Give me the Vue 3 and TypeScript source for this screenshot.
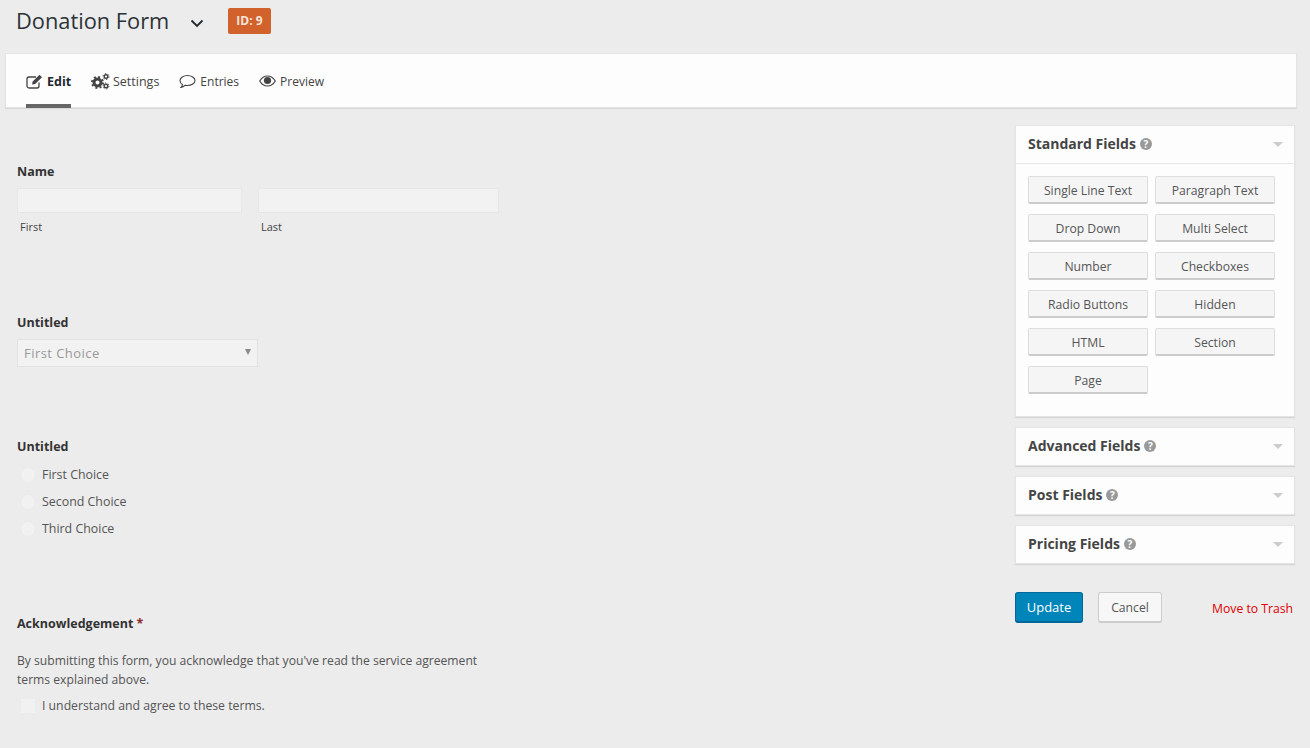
<script setup lang="ts">
const tabs = ['Settings', 'Entries', 'Preview']
const fields = ['Single Line Text', 'Paragraph Text', 'Drop Down', 'Multi Select', 'Number', 'Checkboxes', 'Radio Buttons', 'Hidden', 'HTML', 'Section', 'Page']
const groups = ['Advanced Fields', 'Post Fields', 'Pricing Fields']
const choices = ['First Choice', 'Second Choice', 'Third Choice']
</script>

<template>
  <div class="page">
    <header class="head">
      <h1>Donation Form</h1>
      <svg class="chev" width="14" height="9" viewBox="0 0 14 9"><path d="M1.5 1.5 7 7l5.500-5.500" fill="none" stroke="#23282d" stroke-width="1.800" /></svg>
      <span class="badge">ID: 9</span>
    </header>

    <nav class="tabs">
      <a class="tab active">
        <svg width="17" height="15" viewBox="0 0 17 15"><path d="M13 8.500V12a2 2 0 0 1-2 2H3a2 2 0 0 1-2-2V5a2 2 0 0 1 2-2h7" fill="none" stroke="#444" stroke-width="1.300" /><path d="M6 10.500 6.700 7.500 13.500 .8 16 3.200 9.200 10z" fill="#444" /></svg>
        Edit
      </a>
      <a class="tab s">
        <svg width="19" height="17" viewBox="0 0 19 17"><g fill="none" stroke="#444"><circle cx="6.500" cy="9.500" r="3.500" stroke-width="3" /><circle cx="6.500" cy="9.500" r="5.600" stroke-width="1.800" stroke-dasharray="2 2.400" /><circle cx="15" cy="3.500" r="1.800" stroke-width="1.400" /><circle cx="15" cy="3.500" r="3" stroke-width="1" stroke-dasharray="1.400 1.740" /><circle cx="15" cy="13" r="1.800" stroke-width="1.400" /><circle cx="15" cy="13" r="3" stroke-width="1" stroke-dasharray="1.400 1.740" /></g></svg>
        {{ tabs[0] }}
      </a>
      <a class="tab e">
        <svg width="17" height="15" viewBox="0 0 17 15"><path d="M8.500 1.500c4 0 7.500 2.200 7.500 5s-3.500 5-7.500 5c-.8 0-1.600-.1-2.300-.3C5 12.500 3.500 13.500 2 13.500c.8-.8 1.500-2 1.500-3C1.900 9.600 1 8.100 1 6.500c0-2.800 3.500-5 7.500-5z" fill="none" stroke="#444" stroke-width="1.100" /></svg>
        {{ tabs[1] }}
      </a>
      <a class="tab p">
        <svg width="17" height="12" viewBox="0 0 17 12"><path d="M.7 6C2.500 3 5.300 1 8.500 1s6 2 7.800 5c-1.800 3-4.600 5-7.800 5S2.500 9 .7 6z" fill="none" stroke="#444" stroke-width="1.200" /><circle cx="8.500" cy="5.500" r="3.600" fill="#444" /></svg>
        {{ tabs[2] }}
      </a>
    </nav>

    <div class="columns">
      <main class="form">
        <section class="name-field">
          <div class="label">Name</div>
          <div class="name-row">
            <div class="name-col first">
              <div class="input"></div>
              <div class="sub">First</div>
            </div>
            <div class="name-col last">
              <div class="input"></div>
              <div class="sub">Last</div>
            </div>
          </div>
        </section>

        <section class="select-field">
          <div class="label">Untitled</div>
          <div class="select">
            <span>First Choice</span>
            <span class="arrow"></span>
          </div>
        </section>

        <section class="radio-field">
          <div class="label">Untitled</div>
          <div v-for="c in choices" :key="c" class="choice">
            <span class="radio"></span>{{ c }}
          </div>
        </section>

        <section class="ack-field">
          <div class="label">Acknowledgement <span class="req">*</span></div>
          <p class="ack">By submitting this form, you acknowledge that you've read the service agreement terms explained above.</p>
          <div class="choice check">
            <span class="box"></span>I understand and agree to these terms.
          </div>
        </section>
      </main>

      <aside class="side">
        <div class="panel open">
          <div class="panel-head open-head">
            <span class="title">Standard Fields</span>
            <span class="help">?</span>
            <span class="caret"></span>
          </div>
          <div class="grid">
            <button v-for="f in fields" :key="f" class="field-btn">{{ f }}</button>
          </div>
        </div>
        <div v-for="g in groups" :key="g" class="panel">
          <div class="panel-head">
            <span class="title">{{ g }}</span>
            <span class="help">?</span>
            <span class="caret"></span>
          </div>
        </div>
        <div class="actions">
          <button class="update">Update</button>
          <button class="cancel">Cancel</button>
          <a class="trash">Move to Trash</a>
        </div>
      </aside>
    </div>
  </div>
</template>

<style>
html, body { margin: 0; background: #ececec; }
</style>

<style scoped>
.page {
  width: 1310px;
  height: 748px;
  overflow: hidden;
  background: #ececec;
  font-family: "Open Sans", "Noto Sans", sans-serif;
  font-size: 13px;
  color: #444;
  box-sizing: border-box;
}
.head {
  display: flex;
  align-items: center;
  height: 43px;
  padding-left: 16px;
}
h1 {
  margin: 0 0 2px;
  font-size: 21.800px;
  font-weight: 400;
  color: #2c3338;
  line-height: 39px;
  width: 174px;
}
.chev { margin-top: 3px; }
.badge {
  margin: -1px 0 0 24px;
  width: 43px;
  height: 26px;
  line-height: 26px;
  text-align: center;
  background: #d2622b;
  color: #f4e4da;
  font-weight: 700;
  font-size: 12px;
  border-radius: 2px;
}
.tabs {
  display: flex;
  margin: 10px 13px 0 5px;
  height: 55px;
  box-sizing: border-box;
  background: #fdfdfd;
  border: 1px solid #e4e4e4;
  box-shadow: 0 1px 1px rgba(0, 0, 0, .08);
  padding-left: 20px;
}
.tab {
  display: flex;
  align-items: center;
  gap: 4px;
  height: 54px;
  box-sizing: border-box;
  font-size: 12px;
  color: #444;
  padding-bottom: 0;
}
.tab svg { flex: none; }
.tab.active {
  width: 45px;
  font-size: 12.500px;
  font-weight: 700;
  color: #23282d;
  border-bottom: 4px solid #666;
  padding-top: 4px;
}
.s { margin-left: 20px; gap: 3px; font-size: 12.500px; }
.e { margin-left: 20px; }
.p { margin-left: 20px; gap: 4px; }
.columns {
  display: flex;
  justify-content: space-between;
  padding: 17px 15px 0 17px;
}
.form { width: 482px; }
.label {
  font-weight: 700;
  font-size: 12.500px;
  line-height: 18px;
  color: #333;
}
.name-field { padding-top: 38px; height: 169px; box-sizing: border-box; }
.select-field { padding-top: 20px; height: 124px; box-sizing: border-box; }
.radio-field { margin-top: 20px; height: 177px; box-sizing: border-box; }
.radio-field .choice { font-size: 12.400px; }
.name-row { display: flex; gap: 16px; margin-top: 7px; }
.name-col.first { width: 225px; }
.name-col.last { width: 241px; }
.input {
  height: 25px;
  box-sizing: border-box;
  background: #f2f2f2;
  border: 1px solid #e6e6e6;
  border-radius: 1px;
}
.sub {
  font-size: 11px;
  line-height: 14px;
  margin: 7px 0 0 3px;
  color: #444;
}
.select {
  display: flex;
  align-items: center;
  justify-content: space-between;
  width: 241px;
  height: 28px;
  margin-top: 7px;
  padding: 0 6px;
  box-sizing: border-box;
  background: #f2f2f2;
  border: 1px solid #e2e2e2;
  color: #999;
  font-size: 13px;
  letter-spacing: .45px;
}
.arrow {
  width: 0;
  height: 0;
  border-left: 3.500px solid transparent;
  border-right: 3.500px solid transparent;
  border-top: 6px solid #888;
  margin-top: -2px;
}
.choice {
  display: flex;
  align-items: center;
  height: 27px;
  font-size: 12.250px;
  color: #555;
}
.radio-field .label { margin-bottom: 5px; }
.radio, .box {
  width: 16px;
  height: 16px;
  margin: 0 6px 0 3px;
  box-sizing: border-box;
  background: #f1f1f1;
  border: 1px solid #ebebeb;
  flex: none;
}
.radio { border-radius: 50%; }
.req { color: #8a2a2a; }
.ack {
  margin: 18px 0 0;
  line-height: 19px;
  font-size: 12.150px;
  color: #555;
}
.check { margin-top: 3px; }
.side { width: 280px; }
.panel {
  background: #fdfdfd;
  border: 1px solid #e4e4e4;
  box-shadow: 0 1px 1px rgba(0, 0, 0, .1);
  margin-bottom: 10px;
  box-sizing: border-box;
}
.panel-head {
  position: relative;
  display: flex;
  align-items: center;
  height: 37px;
  padding: 0 0 2px 12px;
  box-sizing: border-box;
  gap: 4px;
}
.open-head { border-bottom: 1px solid #e6e6e6; height: 38px; padding-bottom: 2px; }
.title {
  font-weight: 700;
  font-size: 14px;
  color: #444;
}
.help {
  width: 12px;
  height: 12px;
  border-radius: 50%;
  background: #999;
  color: #fdfdfd;
  font-size: 10px;
  font-weight: 700;
  line-height: 12px;
  text-align: center;
}
.caret {
  position: absolute;
  right: 11px;
  top: 16px;
  width: 0;
  height: 0;
  border-left: 5px solid transparent;
  border-right: 5px solid transparent;
  border-top: 5px solid #ccc;
}
.grid {
  display: grid;
  grid-template-columns: 120px 120px;
  gap: 10px 7px;
  padding: 12px 12px 22px;
}
.field-btn {
  height: 28px;
  padding: 2px 0 0;
  box-sizing: border-box;
  background: #f5f5f5;
  border: 1px solid #ddd;
  border-bottom: 2px solid #ccc;
  border-radius: 2px;
  font: 400 12.200px "Open Sans", "Noto Sans", sans-serif;
  color: #555;
}
.actions {
  display: flex;
  align-items: center;
  margin-top: 28px;
}
.update {
  width: 68px;
  height: 31px;
  padding: 0;
  background: #0085ba;
  border: 1px solid #006799;
  border-bottom-width: 2px;
  border-radius: 3px;
  color: #fff;
  font: 400 13px "Open Sans", "Noto Sans", sans-serif;
}
.cancel {
  width: 64px;
  height: 31px;
  margin-left: 15px;
  padding: 0;
  background: #f7f7f7;
  border: 1px solid #ccc;
  border-bottom-width: 2px;
  border-radius: 3px;
  color: #555;
  font: 400 12.200px "Open Sans", "Noto Sans", sans-serif;
}
.trash {
  margin-left: auto;
  margin-right: 2px;
  color: #d00;
  font-size: 12.200px;
  padding-top: 2px;
}
</style>
